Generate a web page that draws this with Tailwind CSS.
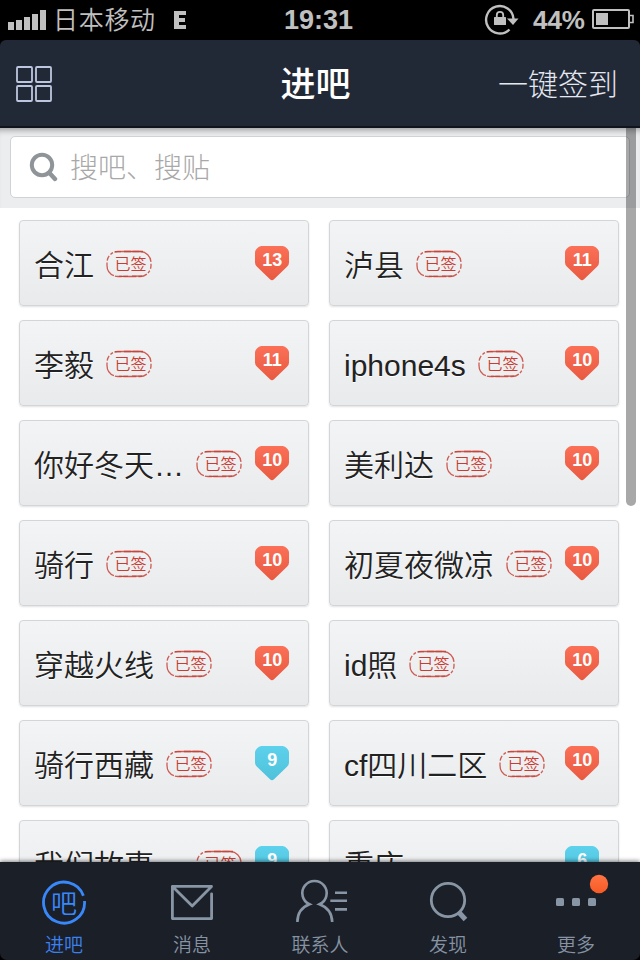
<!DOCTYPE html>
<html lang="zh-CN">
<head>
<meta charset="utf-8">
<title>进吧</title>
<script src="https://cdn.jsdelivr.net/npm/@tailwindcss/browser@4"></script>
</head>
<body class="bg-black">
<svg class="absolute w-0 h-0" aria-hidden="true">
  <defs>
    <linearGradient id="red" x1="0" y1="0" x2="0" y2="1"><stop offset="0" stop-color="#fb7057"/><stop offset="1" stop-color="#e85941"/></linearGradient>
    <linearGradient id="blue" x1="0" y1="0" x2="0" y2="1"><stop offset="0" stop-color="#5dd2ec"/><stop offset="1" stop-color="#4fc1da"/></linearGradient>
    <linearGradient id="dot" x1="0" y1="0" x2="0" y2="1"><stop offset="0" stop-color="#ff7444"/><stop offset="1" stop-color="#f75a24"/></linearGradient>
  </defs>
</svg>
<div class="relative w-[640px] h-[960px] flex flex-col overflow-hidden font-['Liberation_Sans','Noto_Sans_CJK_SC',sans-serif]">
  <div class="h-10 shrink-0 bg-black flex items-center text-[#c0c0c0] pl-2 pr-[6px]">
    <div class="flex-1 flex items-center">
      <svg class="w-[39px] h-5" viewBox="0 0 39 20" fill="#c0c0c0"><path d="M0 12h6v8H0zM8 10h6v10H8zM16 7h6v13h-6zM24 4h6v16h-6zM32 0h6v20h-6z"/></svg>
      <span class="ml-[6px] mt-px text-[25px] leading-[39px] font-[350] tracking-[.7px]">日本移动</span>
      <svg class="ml-[18px] w-3 h-[18px]" viewBox="0 0 12 18" fill="#c0c0c0"><path d="M0 0h12v4H5v3h6v4H5v3h7v4H0z"/></svg>
    </div>
    <span class="-ml-[5px] text-[27px] leading-10 font-bold">19:31</span>
    <div class="flex-1 flex items-center justify-end">
      <svg class="w-[36px] h-8 -mt-[2px]" viewBox="0 0 36 32"><path d="M25.500 26.500A13.700 13.700 0 1 1 29.500 16" fill="none" stroke="#c0c0c0" stroke-width="2.400"/><path d="M23 15.500h11.500L29 22z" fill="#c0c0c0"/><rect x="10" y="14" width="12" height="8" rx=".6" fill="#c0c0c0"/><path d="M12.800 15v-3a3.200 3.200 0 0 1 6.400 0v3" fill="none" stroke="#c0c0c0" stroke-width="1.800"/></svg>
      <span class="ml-[13px] text-[26px] leading-10 font-bold">44%</span>
      <svg class="ml-[7px] w-[42px] h-5 -mt-[2px]" viewBox="0 0 42 20"><rect x="1" y="1" width="36" height="18" rx="1" fill="none" stroke="#c0c0c0" stroke-width="2"/><path d="M4 4h12v12H4z" fill="#c0c0c0"/><path d="M38 6.500h3v7h-3" fill="none" stroke="#c0c0c0" stroke-width="1.600"/></svg>
    </div>
  </div>
  <header class="h-[88px] shrink-0 bg-[#222936] border-b-2 border-[#10141c] rounded-t-[6px] flex items-center pl-4 pr-[22px]">
    <div class="flex-1"><svg class="w-9 h-9 mt-[2px]" viewBox="0 0 36 36" fill="none" stroke="#bcc6de" stroke-width="1.800"><rect x="1" y="1" width="15" height="15" rx="1"/><rect x="20" y="1" width="15" height="15" rx="1"/><rect x="1" y="20" width="15" height="15" rx="1"/><rect x="20" y="20" width="15" height="15" rx="1"/></svg></div>
    <h1 class="-ml-[3px] mt-[3px] text-[35px] leading-[50px] font-medium text-white">进吧</h1>
    <div class="flex-1 mt-[3px] text-right text-[30px] leading-[50px] font-light text-[#e3e7f0]">一键签到</div>
  </header>
  <main class="relative flex-1 min-h-0 overflow-hidden bg-white">
    <div class="h-20 bg-[#ebedef] px-[10px] pt-2 pb-[10px] shadow-[inset_0_7px_6px_-5px_rgba(0,0,0,.35)]">
      <div class="h-[62px] bg-white border border-[#cfd3d6] rounded-[5px] flex items-center pl-[18px]">
        <svg class="w-[29px] h-[31px]" viewBox="0 0 29 31" fill="none" stroke="#8e9498"><circle cx="13" cy="13" r="10.200" stroke-width="4"/><path d="M20 20.500l6 6.500" stroke-width="4.400" stroke-linecap="round"/></svg>
        <span class="ml-[12px] mt-[4px] text-[28px] leading-10 font-light text-[#a8a8a8]">搜吧、搜贴</span>
      </div>
    </div>
    <div id="forums" class="grid grid-cols-[290px_290px] gap-x-5 gap-y-[14px] pl-[19px] pt-3"></div>
    <div class="absolute top-0 left-[626px] w-[10px] h-[378px] bg-black/34 rounded-b-[5px]"></div>
  </main>
  <nav class="relative h-[98px] shrink-0 bg-[#1b1f28] rounded-b-[7px] shadow-[0_-1px_4px_rgba(0,0,0,.5)] grid grid-cols-5 text-[#8593a3] text-[19px] leading-[28px]">
    <div class="flex flex-col items-center pt-[17px] text-[#3c81f0]">
      <svg class="w-12 h-12" viewBox="0 0 48 48"><path d="M43.400 16.800A20.500 20.500 0 1 0 44.500 22" fill="none" stroke="#3988fb" stroke-width="2.800"/><text x="24" y="33.500" text-anchor="middle" fill="#3988fb" font-size="26" font-weight="350" font-family="Noto Sans CJK SC">吧</text></svg>
      <span class="mt-[5px] font-[350]">进吧</span>
    </div>
    <div class="flex flex-col items-center pt-[17px]">
      <svg class="w-12 h-12" viewBox="0 0 48 48" fill="none" stroke="#8795a5" stroke-width="2.800" stroke-linejoin="round" stroke-linecap="round"><path d="M43.600 14.800V39.600H4.400V7.400H43.500L24.200 27 5 8"/></svg>
      <span class="mt-[5px] font-[350]">消息</span>
    </div>
    <div class="flex flex-col items-center pt-[17px]">
      <svg class="w-[56px] h-12" viewBox="0 0 56 48" fill="none" stroke="#8795a5" stroke-width="2.600"><path d="M5.400 43C5.400 34 9 28.500 17.500 25.300A12.200 12.200 0 1 1 27.500 25.300C36 28.500 40 34 40.200 43"/><path d="M43 13.700h12M38.300 21.700h16.700M43 30.400h12"/></svg>
      <span class="mt-[5px] font-[350]">联系人</span>
    </div>
    <div class="flex flex-col items-center pt-[17px]">
      <svg class="w-12 h-12" viewBox="0 0 48 48" fill="none" stroke="#8795a5"><circle cx="24" cy="21" r="16.700" stroke-width="2.800"/><path d="M35 33.500L41.500 40.500" stroke-width="5" /></svg>
      <span class="mt-[5px] font-[350]">发现</span>
    </div>
    <div class="flex flex-col items-center pt-[17px]">
      <svg class="w-[64px] h-12 overflow-visible" viewBox="0 0 64 48" fill="#8795a5"><rect x="12" y="19" width="8" height="8" rx="1.500"/><rect x="28" y="19" width="8" height="8" rx="1.500"/><rect x="44" y="19" width="8" height="8" rx="1.500"/><circle cx="55" cy="5" r="9.200" fill="url(#dot)"/></svg>
      <span class="mt-[5px] font-[350]">更多</span>
    </div>
  </nav>
</div>
<script>
const forums = [
  ['合江', 13], ['泸县', 11],
  ['李毅', 11], ['iphone4s', 10],
  ['你好冬天…', 10], ['美利达', 10],
  ['骑行', 10], ['初夏夜微凉', 10],
  ['穿越火线', 10], ['id照', 10],
  ['骑行西藏', 9], ['cf四川二区', 10],
  ['我们故事…', 9], ['重庆', 6, false]
];
const stamp = `<svg class="ml-[12px] mt-[2px] w-[46px] h-7 shrink-0" viewBox="0 0 46 28">
  <rect x="1" y="1.500" width="44" height="25" rx="11" fill="none" stroke="#d05b52" stroke-width="1.300" stroke-dasharray="13 1.500 7 1 16 2 5 2 3 1.500 9 2"/>
  <path d="M9 1.700h6M18 1.500h19M13 26.300h9M26 26.100h10" stroke="#c8473d" stroke-width="1.300"/>
  <text x="24.500" y="20" text-anchor="middle" font-size="16" font-weight="350" font-family="Noto Sans CJK SC" fill="#c93c31">已签</text></svg>`;
document.getElementById('forums').innerHTML = forums.map(([name, level, signed = true]) => `
<div class="h-[86px] rounded-[4px] border border-[#d2d6d9] bg-linear-to-b from-[#f3f4f5] to-[#e8eaec] shadow-[0_1px_2px_rgba(0,0,0,.12)] flex items-center pl-[14px] pr-[19px]">
  <span class="mt-[6px] text-[30px] leading-[44px] font-[350] text-[#222] whitespace-nowrap [text-shadow:0_1px_0_#fff]">${name}</span>
  ${signed ? stamp : ''}
  <svg class="ml-auto w-[34px] h-9 shrink-0" viewBox="0 0 34 36"><path d="M6.500 1H27.500Q29.500 1 31 2.500L32.700 4.300Q34 5.500 34 7.500V17.500Q34 20 32 21.800L19 34.300Q17 36 15 34.300L2 21.800Q0 20 0 17.500V7.500Q0 5.500 1.300 4.300L3 2.500Q4.500 1 6.500 1Z" fill="url(#${level > 9 ? 'red' : 'blue'})"/><text x="17.200" y="21" text-anchor="middle" font-size="18" font-weight="700" font-family="Liberation Sans" fill="#fff">${level}</text></svg>
</div>`).join('');
</script>
</body>
</html>
